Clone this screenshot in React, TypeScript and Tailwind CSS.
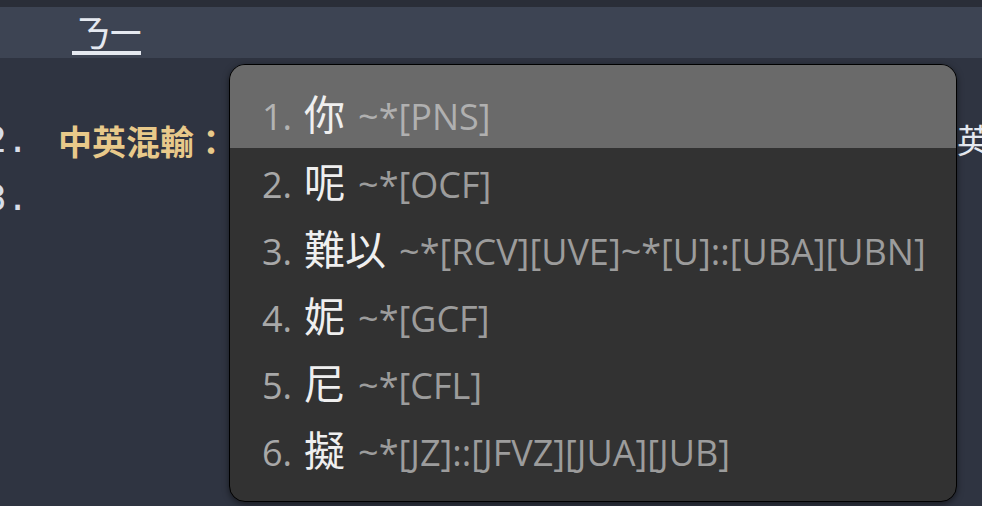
const candidates = [
  { n: "1", word: "你", code: "~*[PNS]" },
  { n: "2", word: "呢", code: "~*[OCF]" },
  { n: "3", word: "難以", code: "~*[RCV][UVE]~*[U]::[UBA][UBN]" },
  { n: "4", word: "妮", code: "~*[GCF]" },
  { n: "5", word: "尼", code: "~*[CFL]" },
  { n: "6", word: "擬", code: "~*[JZ]::[JFVZ][JUA][JUB]" },
];

const cjk = { fontFamily: '"Noto Sans CJK TC", "Noto Sans CJK SC", sans-serif' };

export default function App() {
  return (
    <main className="relative w-[982px] h-[506px] overflow-hidden bg-[#2f3441] text-[#dfe3ea]">
      <div className="h-[7px] bg-[#2a2e38]" />

      {/* current line with composition */}
      <div className="h-[51px] bg-[#3d4453] flex items-start pl-[72px] pt-[4px]">
        <span
          className="block h-[44px] text-[38px] leading-[40px] pl-[2px] pr-[1px] border-b-[4px] border-[#e5e9f0] text-[#e5e9f0] tracking-[-5px]"
          style={cjk}
        >
          ㄋㄧ
        </span>
      </div>

      <div className="pt-[53px]">
        <div className="h-[58px] flex items-center whitespace-nowrap">
          <span className="ml-[-15px] w-[73px] shrink-0 text-[36px] font-['DejaVu_Sans_Mono',monospace] text-[#d8dee9]">2.</span>
          <span className="text-[34px] font-bold text-[#e8c98a]" style={cjk}>中英混輸：</span>
          <span className="inline-block w-[729px] shrink-0" />
          <span className="text-[33px] text-[#e5e9f0]" style={cjk}>英文</span>
        </div>
        <div className="h-[58px] flex items-center whitespace-nowrap">
          <span className="ml-[-15px] text-[36px] font-['DejaVu_Sans_Mono',monospace] text-[#d8dee9]">3.</span>
        </div>
      </div>

      {/* candidate window */}
      <div className="absolute left-[229px] top-[64px] w-[728px] h-[438px] rounded-[16px] border border-black bg-[#323232] overflow-hidden shadow-[0_2px_6px_rgba(0,0,0,0.5)]">
        {candidates.map((c, i) => (
          <div
            key={c.n}
            className={
              i === 0
                ? "h-[83px] pt-[14px] pl-[32px] flex items-center bg-[#6a6a6a]"
                : "h-[67px] pl-[32px] flex items-center"
            }
          >
            <div className="flex items-baseline whitespace-nowrap font-['Open_Sans',sans-serif] text-[36px] leading-none font-medium">
              <span className={i === 0 ? "text-[#b3b3b3]" : "text-[#a8a8a8]"}>{c.n}.</span>
              <span className="ml-[12px] text-[41px] font-normal text-[#efefef]" style={cjk}>{c.word}</span>
              <span className={i === 0 ? "ml-[13px] text-[#b0b0b0]" : "ml-[13px] text-[#9c9c9c]"}>{c.code}</span>
            </div>
          </div>
        ))}
      </div>
    </main>
  );
}
